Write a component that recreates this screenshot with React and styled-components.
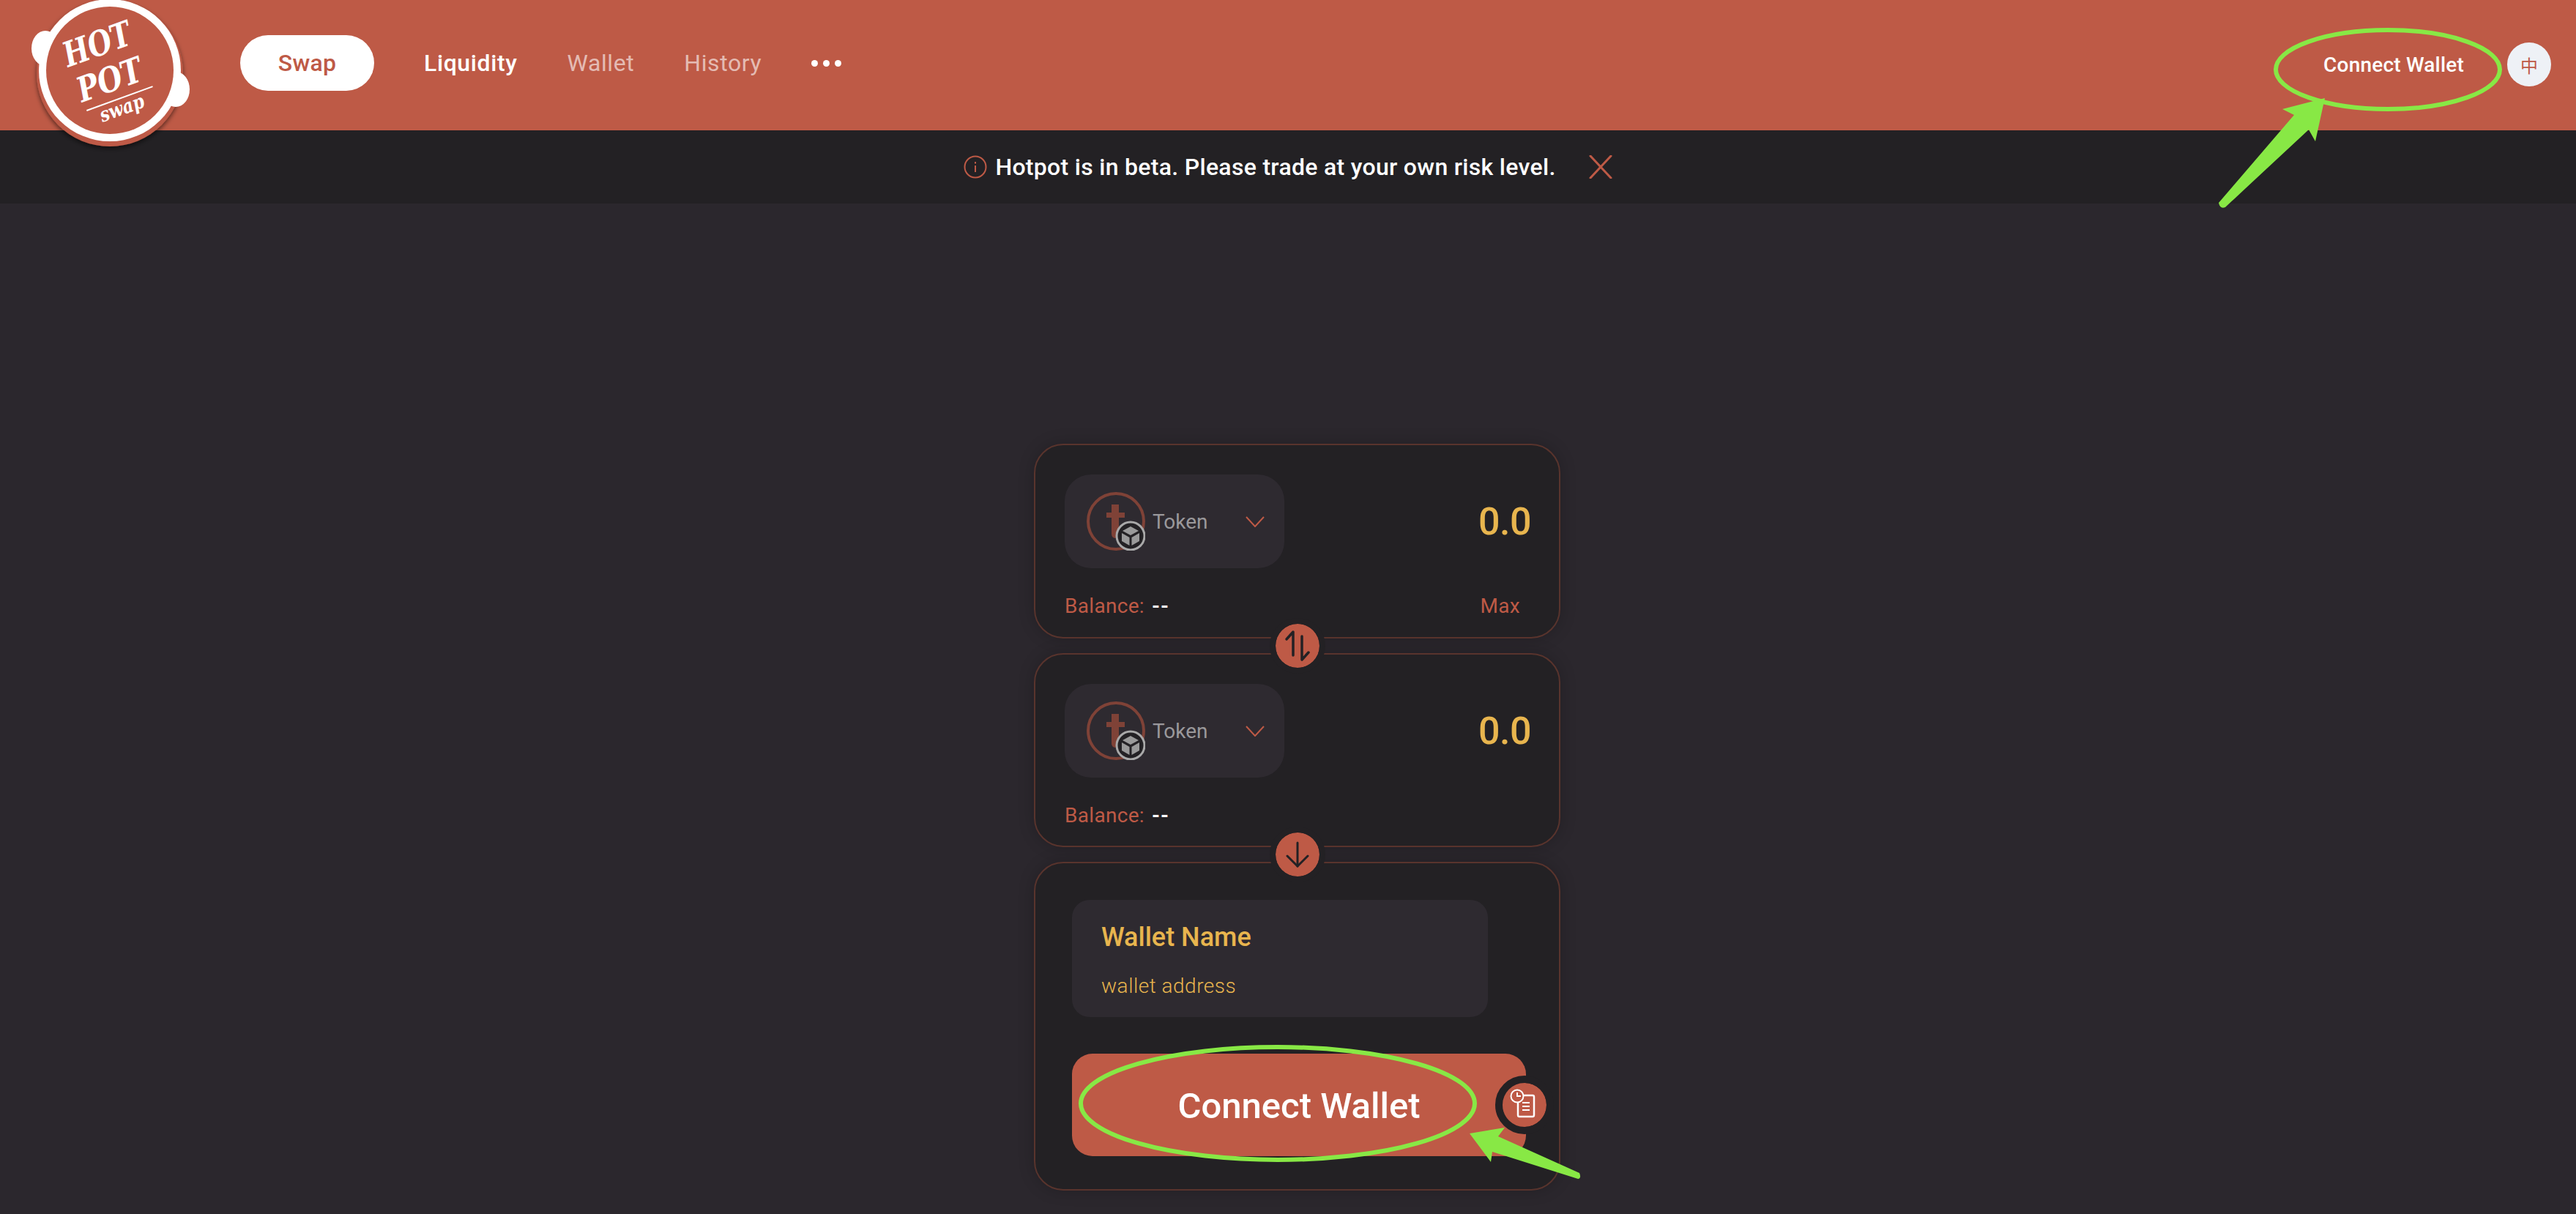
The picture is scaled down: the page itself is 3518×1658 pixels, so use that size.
import styled, { createGlobalStyle } from 'styled-components';

const RUST = '#BE5A46';
const DARK = '#232124';
const PAGE = '#2B272D';
const PANEL = '#2E2A30';
const GOLD = '#E8B54E';
const GREEN = '#88E845';

const GlobalStyle = createGlobalStyle`
  html, body {
    margin: 0;
    padding: 0;
    height: 100%;
    background: ${PAGE};
    font-family: Roboto, "Liberation Sans", sans-serif;
    overflow: hidden;
  }
`;

const Page = styled.div`
  position: relative;
  width: 3518px;
  height: 1658px;
  overflow: hidden;
`;

const Header = styled.header`
  display: flex;
  align-items: center;
  justify-content: space-between;
  height: 178px;
  padding: 0 34px 2px 328px;
  box-sizing: border-box;
  background: ${RUST};
`;

const Nav = styled.nav`
  display: flex;
  align-items: center;
  gap: 68px;
  margin-bottom: 4px;
`;

const SwapPill = styled.div`
  display: flex;
  align-items: center;
  justify-content: center;
  width: 183px;
  height: 76px;
  border-radius: 38px;
  background: #fff;
  color: ${RUST};
  font-size: 32px;
  font-weight: 500;
  letter-spacing: 0.3px;
`;

const NavLink = styled.div`
  color: ${({ $muted }) => ($muted ? 'rgba(255, 255, 255, 0.6)' : '#fff')};
  font-size: 32px;
  font-weight: ${({ $muted }) => ($muted ? 400 : 500)};
  letter-spacing: 0.6px;
`;

const Dots = styled.div`
  display: flex;
  gap: 7px;
  width: 41px;
  span {
    width: 9px;
    height: 9px;
    border-radius: 50%;
    background: #fff;
  }
`;

const HeaderRight = styled.div`
  display: flex;
  align-items: center;
  gap: 59px;
`;

const ConnectLink = styled.div`
  color: #fff;
  font-size: 28px;
  font-weight: 500;
  letter-spacing: 0.2px;
`;

const LangButton = styled.div`
  display: flex;
  align-items: center;
  justify-content: center;
  width: 60px;
  height: 60px;
  border-radius: 50%;
  background: #eef1f6;
  color: ${RUST};
  font-family: "Noto Sans CJK SC", sans-serif;
  font-size: 24px;
`;

const Banner = styled.div`
  display: flex;
  align-items: center;
  justify-content: center;
  height: 100px;
  background: ${DARK};
  color: #fff;
  font-size: 32px;
  font-weight: 500;
  letter-spacing: 0.3px;
`;

const BannerText = styled.span`
  margin: 0 45px 0 11px;
`;

const LogoMark = styled.svg`
  position: absolute;
  left: 30px;
  top: -10px;
  width: 240px;
  height: 220px;
`;

const Main = styled.main`
  display: flex;
  flex-direction: column;
  align-items: center;
  gap: 20px;
  padding: 328px 0 0 25px;
`;

const Card = styled.section`
  position: relative;
  box-sizing: border-box;
  width: 719px;
  min-height: ${({ $height }) => $height}px;
  padding: 40px 41px 0 40px;
  border: 2px solid #59342d;
  border-radius: 40px;
  background: ${DARK};
  box-shadow: 0 0 22px rgba(0, 0, 0, 0.2);
`;

const WalletCard = styled(Card)`
  padding: 50px 50px 0;
`;

const TokenRow = styled.div`
  display: flex;
  align-items: center;
  justify-content: space-between;
`;

const TokenSelect = styled.div`
  display: flex;
  align-items: center;
  box-sizing: border-box;
  width: 300px;
  height: 128px;
  padding: 0 27px 0 30px;
  border-radius: 36px;
  background: ${PANEL};
`;

const TokenName = styled.span`
  margin-left: 10px;
  color: #9a989b;
  font-size: 28px;
`;

const Chevron = styled.svg`
  width: 26px;
  height: 15px;
  margin-left: auto;
`;

const Amount = styled.div`
  margin-right: -3px;
  color: ${GOLD};
  font-size: 52px;
  font-weight: 500;
  letter-spacing: -0.5px;
`;

const BalanceRow = styled.div`
  display: flex;
  align-items: center;
  justify-content: space-between;
  height: 34px;
  margin-top: 34px;
  padding-right: 12px;
  color: ${RUST};
  font-size: 28px;
  letter-spacing: 0.3px;
`;

const BalanceValue = styled.span`
  margin-left: 10px;
  color: #fff;
  font-weight: 700;
  letter-spacing: 1px;
`;

const ArrowButton = styled.div`
  position: absolute;
  left: 50%;
  bottom: -50px;
  z-index: 2;
  display: flex;
  align-items: center;
  justify-content: center;
  width: 60px;
  height: 60px;
  border: 8px solid ${DARK};
  border-radius: 50%;
  background: ${RUST};
  background-clip: padding-box;
  transform: translateX(-50%);
  box-sizing: content-box;
`;

const WalletBox = styled.div`
  box-sizing: border-box;
  width: 568px;
  height: 160px;
  padding: 30px 40px;
  border-radius: 24px;
  background: ${PANEL};
  color: ${GOLD};
`;

const WalletName = styled.div`
  font-size: 36px;
  font-weight: 500;
`;

const WalletAddress = styled.div`
  margin-top: 29px;
  font-size: 28px;
  font-weight: 300;
  letter-spacing: 0.5px;
`;

const ConnectButton = styled.div`
  position: relative;
  display: flex;
  align-items: center;
  justify-content: center;
  box-sizing: border-box;
  width: 620px;
  height: 140px;
  margin-top: 50px;
  padding-top: 3px;
  border-radius: 28px;
  background: ${RUST};
  color: #fff;
  font-size: 49px;
  font-weight: 500;
`;

const HistoryBadge = styled.div`
  position: absolute;
  right: -38px;
  top: 30px;
  display: flex;
  align-items: center;
  justify-content: center;
  width: 60px;
  height: 60px;
  border: 10px solid ${DARK};
  border-radius: 50%;
  background: ${RUST};
  background-clip: padding-box;
`;

const Annotations = styled.svg`
  position: absolute;
  left: 0;
  top: 0;
  z-index: 5;
  width: 3518px;
  height: 1658px;
  pointer-events: none;
`;

const Logo = () => (
  <LogoMark viewBox="30 -10 240 220">
    <defs>
      <filter id="logoShadow" x="-20%" y="-20%" width="140%" height="140%">
        <feDropShadow dx="0" dy="3" stdDeviation="3" floodColor="#000" floodOpacity="0.55" />
      </filter>
    </defs>
    <circle cx="150" cy="100" r="100" fill={RUST} filter="url(#logoShadow)" />
    <circle cx="150" cy="96" r="97" fill="#fff" />
    <ellipse cx="62" cy="66" rx="19" ry="24" fill="#fff" />
    <ellipse cx="240" cy="122" rx="19" ry="24" fill="#fff" />
    <circle cx="150" cy="96" r="87" fill={RUST} />
    <g fill="#fff" fontFamily="'DejaVu Serif', serif" fontWeight="700" fontStyle="italic">
      <text transform="translate(93 92) rotate(-20)" fontSize="47" textLength="96" lengthAdjust="spacingAndGlyphs">HOT</text>
      <text transform="translate(112 140) rotate(-20)" fontSize="47" textLength="92" lengthAdjust="spacingAndGlyphs">POT</text>
      <rect transform="translate(118 150) rotate(-20)" width="96" height="2" />
      <text transform="translate(140 167) rotate(-20)" fontSize="27" textLength="63" lengthAdjust="spacingAndGlyphs">swap</text>
    </g>
  </LogoMark>
);

const InfoIcon = () => (
  <svg width="32" height="32" viewBox="0 0 32 32" fill="none" stroke={RUST} strokeWidth="2">
    <circle cx="16" cy="16" r="14.5" />
    <path d="M16 14v9" />
    <path d="M16 9v2.5" />
  </svg>
);

const CloseIcon = () => (
  <svg width="32" height="32" viewBox="0 0 32 32" fill="none" stroke={RUST} strokeWidth="3" strokeLinecap="round">
    <path d="M2 1l28 30M30 1L2 31" />
  </svg>
);

const TokenIcon = () => (
  <svg width="80" height="80" viewBox="0 0 80 80" fill="none">
    <circle cx="40" cy="40" r="38" stroke="#7f4237" strokeWidth="4" />
    <path d="M34 17h10v11h8v7h-8v22q0 6 6 6h-10q-6 0-6-6V35h-7v-7h7z" fill="#7f4237" />
    <circle cx="60" cy="60" r="19" fill={DARK} stroke="#a9a9a9" strokeWidth="3" />
    <path d="M60 47l11 6-11 6-11-6z" fill="#9a9a9a" />
    <path d="M48 56l10.500 6v11l-10.500-6zM72 56l-10.500 6v11l10.500-6z" fill="#9a9a9a" />
  </svg>
);

const SwapIcon = () => (
  <svg width="36" height="44" viewBox="0 0 36 44" fill="none" stroke={DARK} strokeWidth="3.500" strokeLinecap="round" strokeLinejoin="round">
    <path d="M3 13L12 3v32" />
    <path d="M33 31l-9 10V9" />
  </svg>
);

const DownIcon = () => (
  <svg width="32" height="36" viewBox="0 0 32 36" fill="none" stroke={DARK} strokeWidth="3" strokeLinecap="round" strokeLinejoin="round">
    <path d="M16 2v32" />
    <path d="M2 20l14 14 14-14" />
  </svg>
);

const HistoryIcon = () => (
  <svg width="60" height="60" viewBox="0 0 60 60" fill="none" stroke="#fff" strokeWidth="2">
    <path d="M21 17h20a2 2 0 0 1 2 2v25a2 2 0 0 1-2 2H23a2 2 0 0 1-2-2V24" strokeWidth="2.500" />
    <path d="M27 27h10M27 32h10M27 37h10" strokeWidth="2" />
    <circle cx="20" cy="18" r="8.500" fill={RUST} />
    <path d="M20 13v5h5" />
  </svg>
);

const TokenPanel = ({ height, max, children }) => (
  <Card $height={height}>
    <TokenRow>
      <TokenSelect>
        <TokenIcon />
        <TokenName>Token</TokenName>
        <Chevron viewBox="0 0 26 15" fill="none" stroke={RUST} strokeWidth="2">
          <path d="M1 1l12 13L25 1" />
        </Chevron>
      </TokenSelect>
      <Amount>0.0</Amount>
    </TokenRow>
    <BalanceRow>
      <span>
        Balance:<BalanceValue>--</BalanceValue>
      </span>
      {max ? <span>Max</span> : null}
    </BalanceRow>
    {children}
  </Card>
);

const App = () => (
  <Page>
    <GlobalStyle />
    <Header>
      <Nav>
        <SwapPill>Swap</SwapPill>
        <NavLink>Liquidity</NavLink>
        <NavLink $muted>Wallet</NavLink>
        <NavLink $muted>History</NavLink>
        <Dots>
          <span />
          <span />
          <span />
        </Dots>
      </Nav>
      <HeaderRight>
        <ConnectLink>Connect Wallet</ConnectLink>
        <LangButton>中</LangButton>
      </HeaderRight>
    </Header>
    <Banner>
      <InfoIcon />
      <BannerText>Hotpot is in beta. Please trade at your own risk level.</BannerText>
      <CloseIcon />
    </Banner>
    <Logo />
    <Main>
      <TokenPanel height={266} max>
        <ArrowButton>
          <SwapIcon />
        </ArrowButton>
      </TokenPanel>
      <TokenPanel height={265}>
        <ArrowButton>
          <DownIcon />
        </ArrowButton>
      </TokenPanel>
      <WalletCard $height={449}>
        <WalletBox>
          <WalletName>Wallet Name</WalletName>
          <WalletAddress>wallet address</WalletAddress>
        </WalletBox>
        <ConnectButton>
          Connect Wallet
          <HistoryBadge>
            <HistoryIcon />
          </HistoryBadge>
        </ConnectButton>
      </WalletCard>
    </Main>
    {/* green markup drawn on top of the screenshot */}
    <Annotations viewBox="0 0 3518 1658">
      <ellipse cx="3261" cy="95" rx="153" ry="54" fill="none" stroke={GREEN} strokeWidth="6" />
      <path d="M3175 134L3117 149L3133 157L3030 277Q3032 286 3039 283L3153 177L3162 193Z" fill={GREEN} />
      <ellipse cx="1745" cy="1507" rx="269" ry="77" fill="none" stroke={GREEN} strokeWidth="6" />
      <path d="M2007 1548L2055 1540L2046 1552L2157 1602Q2160 1609 2155 1610L2038 1573L2036 1587Z" fill={GREEN} />
    </Annotations>
  </Page>
);

export default App;
